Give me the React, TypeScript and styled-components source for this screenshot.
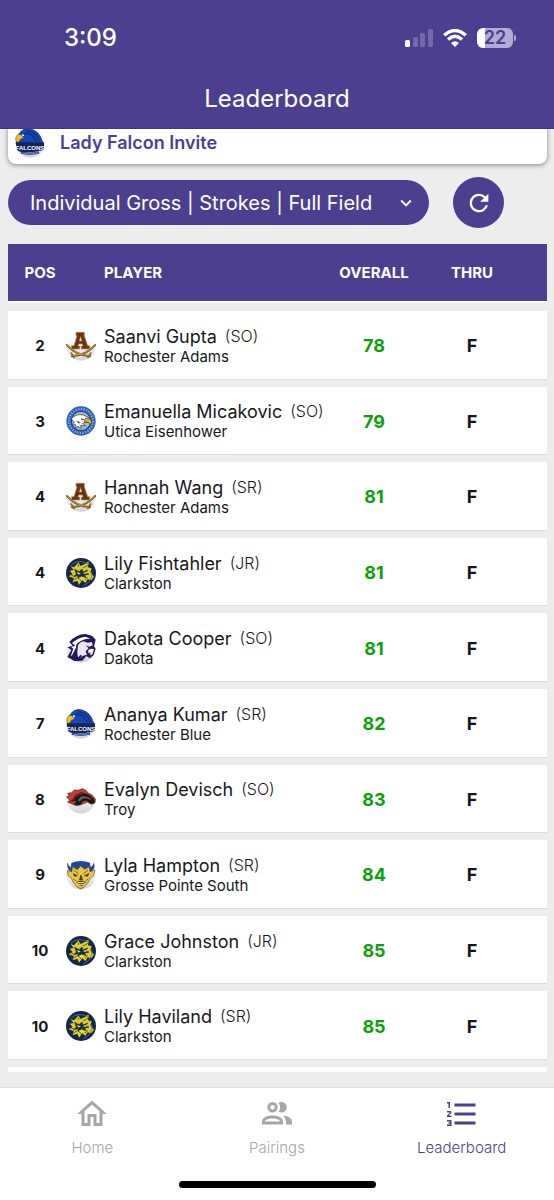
import React from "react";
import styled, { createGlobalStyle } from "styled-components";

const purple = "#4d3f8f";
const ink = "#17171b";

const GlobalStyle = createGlobalStyle`
  * { box-sizing: border-box; }
  body { margin: 0; background: #ededed; font-family: Inter, "Liberation Sans", sans-serif; color: ${ink}; }
`;

const Screen = styled.div`
  display: flex;
  flex-direction: column;
  min-height: 100vh;
`;

const TopBar = styled.header`
  position: relative;
  z-index: 1;
  height: 129px;
  background: ${purple};
  border-bottom: 1px solid #43377f;
  color: #fff;
`;

const StatusBar = styled.div`
  display: flex;
  align-items: center;
  justify-content: space-between;
  padding: 22px 41px 0 64px;
  height: 53px;
`;

const Clock = styled.time`
  font-size: 24px;
  font-weight: 500;
  line-height: 30px;
`;

const StatusIcons = styled.div`
  display: flex;
  align-items: center;
  gap: 10px;
`;

const Battery = styled.span`
  position: relative;
  width: 36px;
  height: 20px;
  border-radius: 6px;
  background: linear-gradient(to right, #fff 8px, #b2abd1 8px);
  color: ${purple};
  font-size: 18px;
  font-weight: 600;
  line-height: 20px;
  text-align: center;
  &::after {
    content: "";
    position: absolute;
    right: -3px;
    top: 7px;
    width: 2px;
    height: 6px;
    border-radius: 0 2px 2px 0;
    background: #b2abd1;
  }
`;

const Title = styled.h1`
  margin: 0;
  padding-top: 30px;
  font-size: 24px;
  font-weight: 400;
  line-height: 32px;
  text-align: center;
`;

const Main = styled.main`
  flex: 1;
  display: flex;
  flex-direction: column;
  padding: 0 7px 15px 8px;
`;

const EventCard = styled.section`
  display: flex;
  align-items: center;
  gap: 15px;
  margin-top: -6px;
  padding: 4px 7px 6px;
  border-radius: 8px;
  background: #fff;
  box-shadow: 0 1px 5px rgba(0, 0, 0, 0.45);
`;

const EventName = styled.h2`
  margin: 0;
  color: ${purple};
  font-size: 18px;
  font-weight: 600;
  line-height: 31px;
`;

const Controls = styled.div`
  display: flex;
  align-items: center;
  gap: 24px;
  padding: 13px 43px 16px 0;
`;

const SelectWrap = styled.label`
  position: relative;
  flex: 1;
  display: flex;
  color: #fff;
  svg {
    position: absolute;
    right: 12px;
    top: 12px;
    pointer-events: none;
  }
`;

const Select = styled.select`
  appearance: none;
  width: 100%;
  height: 45px;
  padding: 0 40px 0 22px;
  border: 0;
  border-radius: 23px;
  background: ${purple};
  color: #fff;
  font-family: inherit;
  font-size: 20px;
`;

const RefreshButton = styled.button`
  display: flex;
  align-items: center;
  justify-content: center;
  width: 51px;
  height: 51px;
  padding: 0;
  border: 0;
  border-radius: 50%;
  background: ${purple};
  color: #fff;
`;

const Table = styled.table`
  flex: 1;
  display: flex;
  flex-direction: column;
`;

const Head = styled.thead`
  display: block;
  border-bottom: 2px solid #fff;
  margin-bottom: 8px;
`;

const Body = styled.tbody`
  flex: 1;
  display: grid;
  grid-template-columns: minmax(0, 1fr);
  grid-template-rows: repeat(10, minmax(68px, 1fr)) 5px;
  gap: 7px;
  &::after {
    content: "";
    background: #fff;
  }
`;

const Row = styled.tr<{ $head?: boolean }>`
  display: grid;
  grid-template-columns: 58px minmax(0, 1fr) 98px 98px;
  align-items: center;
  padding: ${(p) => (p.$head ? "0 26px 0 0" : "1px 26px 0 0")};
  height: ${(p) => (p.$head ? "57px" : "auto")};
  background: ${(p) => (p.$head ? purple : "#fff")};
  box-shadow: ${(p) => (p.$head ? "none" : "inset 0 -1px #dcdce0")};
`;

const HeadCell = styled.th<{ $align?: "left" | "pos" }>`
  padding: 0 0 0 ${(p) => (p.$align === "left" ? "38px" : p.$align === "pos" ? "6px" : "0")};
  color: #fff;
  font-size: 15px;
  font-weight: 700;
  text-align: ${(p) => (p.$align === "left" ? "left" : "center")};
`;

const PosCell = styled.td`
  padding: 0 0 0 6px;
  font-size: 15px;
  font-weight: 700;
  text-align: center;
`;

const PlayerCell = styled.td`
  display: flex;
  align-items: center;
  gap: 8px;
  padding: 0;
`;

const PlayerName = styled.div`
  display: flex;
  gap: 8px;
  font-size: 18px;
  font-weight: 400;
  line-height: 22px;
  white-space: nowrap;
`;

const Grade = styled.span`
  font-size: 16px;
  font-weight: 300;
  line-height: 20px;
`;

const School = styled.div`
  font-size: 15px;
  line-height: 18px;
`;

const ValueCell = styled.td<{ $score?: boolean }>`
  padding: 0;
  color: ${(p) => (p.$score ? "#0ba10b" : ink)};
  font-size: 18px;
  font-weight: 700;
  text-align: center;
`;

const TabBar = styled.nav`
  display: flex;
  flex-wrap: wrap;
  height: 113px;
  border-top: 1px solid #e0e0e0;
  background: #fff;
`;

const Tab = styled.a<{ $active?: boolean }>`
  flex: 1;
  display: flex;
  flex-direction: column;
  align-items: center;
  gap: 6px;
  padding-top: 8px;
  color: ${(p) => (p.$active ? purple : "#a6a6a9")};
  font-size: 15px;
  font-weight: 300;
  line-height: 20px;
  text-decoration: none;
`;

const HomeIndicator = styled.div`
  flex-basis: 100%;
  align-self: flex-end;
  padding-bottom: 12px;
  &::before {
    content: "";
    display: block;
    width: 197px;
    height: 7px;
    margin: 0 auto;
    border-radius: 4px;
    background: #000;
  }
`;

type Team = "adams" | "eisenhower" | "clarkston" | "dakota" | "falcons" | "troy" | "south";

const Ball = () => (
  <>
    <defs>
      <linearGradient id="ball" x1="0" y1="0" x2="0" y2="1">
        <stop offset="0.3" stopColor="#fff" />
        <stop offset="1" stopColor="#d4d4d8" />
      </linearGradient>
    </defs>
    <circle cx="45" cy="45" r="44" fill="url(#ball)" />
  </>
);

const art: Record<Team, React.ReactNode> = {
  adams: (
    <>
      <g fill="none" strokeLinecap="round">
        <path d="M2 42Q34 75 72 76M88 42Q56 75 18 76" stroke="#6f531c" strokeWidth="6" />
        <path d="M2 42Q34 73 66 73M88 42Q56 73 24 73" stroke="#c9a748" strokeWidth="2.5" />
        <path d="M16 66l8 14M74 66l-8 14" stroke="#8a6923" strokeWidth="5" />
      </g>
      <path
        d="M30 4H55V14L65 44H71V54H46V45H51L49 39H38L36 45H41V54H17V44H24L33 14H30ZM44 17L40 30H47Z"
        fill="#6a3515"
        fillRule="evenodd"
        stroke="#b98c48"
        strokeWidth="2"
      />
    </>
  ),
  eisenhower: (
    <>
      <circle cx="45" cy="45" r="44" fill="#2d62b5" />
      <circle cx="45" cy="45" r="36" fill="none" stroke="#7fa6de" strokeWidth="7" strokeDasharray="4 4" />
      <circle cx="45" cy="45" r="29" fill="#aab4be" stroke="#173c7d" strokeWidth="3" />
      <path d="M16 39Q30 22 52 27L70 36Q78 45 74 51L60 48 50 52 58 60 44 58 46 68 36 61 30 66 29 56 19 56 25 49Z" fill="#fff" stroke="#1b2a44" strokeWidth="2" />
      <path d="M58 37Q74 36 77 48L73 56 67 49 55 47Z" fill="#eab92b" stroke="#2a2a20" strokeWidth="2" />
      <path d="M44 37l13 4-9 2zM30 44l14 5-8 3 8 5" fill="#222e3e" />
    </>
  ),
  clarkston: (
    <>
      <circle cx="45" cy="45" r="45" fill="#14264b" />
      <path
        d="M14 25L24 28 38 13 44 24 58 17 68 10 66 28 77 31 73 43 84 56 76 67 65 64 58 75 49 67 39 80 34 68 20 73 23 60 8 55 20 48 11 38 23 36Z"
        fill="#dbcd2f"
      />
      <path
        d="M26 34l13 7 9-8 3 9 14-6-8 10 12 2-13 4 4 7-13-5-10 8-2-9-12 3 8-8zM41 14l-5 13M66 22l-15 8M22 66l12-7M57 66l9-8M46 70l-5-7M14 50l9 4"
        fill="#1c2e42"
        stroke="#1c2e42"
        strokeWidth="2"
      />
      <path d="M32 42l12 4-6 4zM51 45l11-4-4 8zM39 57l15 2-9 6z" fill="#efe24a" />
      <path d="M14 22Q38 0 70 20M77 40Q82 70 52 83" fill="none" stroke="#5f7280" strokeWidth="2.5" />
    </>
  ),
  dakota: (
    <>
      <path d="M10 27Q30 4 58 3L78 8 89 20 84 40 89 47 83 66 72 76 61 69 49 83 25 84 4 72 16 51 4 43 20 38Z" fill="#27175a" />
      <path d="M18 30Q36 14 58 11L74 17Q58 16 44 24Q28 33 30 44L18 67 14 70 22 47 15 42 28 38Z" fill="#fff" />
      <path d="M35 47Q34 29 52 25L65 29 78 27 80 37 70 41 59 37 68 46 59 55 63 65 51 68 40 78Q31 67 35 47Z" fill="#e8e6ef" />
      <path d="M67 51l8-4 9 2-5 15-7 3 2-9-7 3z" fill="#fff" />
      <path d="M32 58l-10 20M46 67l-12 14" stroke="#27175a" strokeWidth="6" />
    </>
  ),
  falcons: (
    <>
      <path d="M7 30Q14 4 38 1Q64 4 76 25L85 47H4Z" fill="#1649b5" stroke="#10255d" strokeWidth="2" />
      <path d="M25 18Q48 8 64 40M36 8Q64 12 73 38" fill="none" stroke="#0e2f83" strokeWidth="4" />
      <path d="M2 32Q5 16 18 20L26 30 16 34 10 44Q1 42 2 32Z" fill="#f2bd26" stroke="#463d25" strokeWidth="1.5" />
      <circle cx="24" cy="22" r="3" fill="#fff" />
      <path d="M2 43H87V66L75 68Q45 76 15 71L5 66Z" fill="#14265b" />
      <text x="45" y="65" textAnchor="middle" fontFamily="Liberation Sans, sans-serif" fontWeight="700" fontSize="18" fill="#fff">
        FALCONS
      </text>
      <path d="M18 74Q45 81 72 73" fill="none" stroke="#1d3e92" strokeWidth="7" />
      <path d="M22 75Q45 80 68 74" fill="none" stroke="#dce6f8" strokeWidth="2" strokeDasharray="4 2" />
    </>
  ),
  troy: (
    <>
      <path d="M2 39L10 34 5 28 17 26 25 18 37 19 49 14 61 20 66 27 77 32 88 45 87 56 78 61 64 54 48 61 31 65 5 54 12 49Z" fill="#d53a2d" stroke="#291a1a" strokeWidth="2" />
      <path d="M13 53L29 32 46 25 66 31 82 43 87 54 76 60 62 50 52 51 41 64 23 61 32 50Z" fill="#161719" />
      <path d="M36 48L44 38 55 36 68 41 75 48 60 43 49 44 40 53Z" fill="#5f6165" />
      <path d="M20 49Q30 30 51 29M12 35l18-8M62 39l14 6" fill="none" stroke="#c72d25" strokeWidth="3" />
    </>
  ),
  south: (
    <>
      <path d="M6 5Q4 15 14 23L16 9Q43-3 72 8L74 22Q85 15 82 5 91 23 78 33L79 43 64 68 54 82 45 87 34 82 24 68 10 43 12 33Q-1 23 6 5Z" fill="#21469a" />
      <path d="M4 31L17 35 20 20 34 29 44 18 56 28 70 20 72 35 87 30 82 48 73 55 65 70 53 82 43 86 32 80 22 67 16 55 6 47Z" fill="#e9c547" stroke="#665020" strokeWidth="2" />
      <path d="M20 39l17 8-12 3zM70 38l-17 9 13 3zM43 46l-4 15h12l-4-15M30 67q15-9 31 0-15 12-31 0" fill="#4b411e" />
      <path d="M23 31l15 10M66 31L52 41M22 57l8 6M67 56l-8 7M40 77h11" fill="none" stroke="#6b5621" strokeWidth="2.5" />
      <path d="M35 68h20" stroke="#fff2a5" strokeWidth="3" />
    </>
  ),
};

const Logo = ({ team }: { team: Team }) => (
  <svg width="30" height="30" viewBox="0 0 90 90" aria-hidden="true">
    <Ball />
    {art[team]}
  </svg>
);

const Icon = ({ d, size }: { d: string; size: number }) => (
  <svg width={size} height={size} viewBox="0 0 24 24" fill="currentColor" aria-hidden="true">
    <path d={d} />
  </svg>
);

const icons = {
  chevron: "M7.41 8.58L12 13.17l4.59-4.59L18 10l-6 6-6-6z",
  refresh: "M17.65 6.35A7.96 7.96 0 0 0 12 4a8 8 0 1 0 7.73 10h-2.08A6 6 0 1 1 12 6c1.66 0 3.14.69 4.22 1.78L13 11h7V4z",
  home: "M12 5.69l5 4.5V18h-2v-6H9v6H7v-7.81l5-4.5M12 3L2 12h3v8h6v-6h2v6h6v-8h3z",
  people:
    "M13.07 10.41a5 5 0 0 0 0-5.82A3.39 3.39 0 0 1 15 4a3.5 3.5 0 0 1 0 7 3.39 3.39 0 0 1-1.93-.59M5.5 7.5A3.5 3.5 0 1 1 9 11a3.5 3.5 0 0 1-3.5-3.5m2 0A1.5 1.5 0 1 0 9 6a1.5 1.5 0 0 0-1.5 1.5M16 17v2H2v-2s0-4 7-4 7 4 7 4m-2 0c-.14-.78-1.33-2-5-2s-4.93 1.31-5 2m11.95-4A5.32 5.32 0 0 1 18 17v2h4v-2s0-3.63-6.06-4z",
  list: "M7 13v-2h14v2H7m0 6v-2h14v2H7M7 7V5h14v2H7M3 8V5H2V4h2v4H3m-1 9v-1h3v4H2v-1h2v-.5H3v-1h1V17H2m2.25-7a.75.75 0 0 1 .75.75c0 .2-.08.39-.21.52L3.12 13H5v1H2v-.92L4 11H2v-1h2.25z",
};

const players: { pos: number; name: string; grade: string; school: string; score: number; team: Team }[] = [
  { pos: 2, name: "Saanvi Gupta", grade: "SO", school: "Rochester Adams", score: 78, team: "adams" },
  { pos: 3, name: "Emanuella Micakovic", grade: "SO", school: "Utica Eisenhower", score: 79, team: "eisenhower" },
  { pos: 4, name: "Hannah Wang", grade: "SR", school: "Rochester Adams", score: 81, team: "adams" },
  { pos: 4, name: "Lily Fishtahler", grade: "JR", school: "Clarkston", score: 81, team: "clarkston" },
  { pos: 4, name: "Dakota Cooper", grade: "SO", school: "Dakota", score: 81, team: "dakota" },
  { pos: 7, name: "Ananya Kumar", grade: "SR", school: "Rochester Blue", score: 82, team: "falcons" },
  { pos: 8, name: "Evalyn Devisch", grade: "SO", school: "Troy", score: 83, team: "troy" },
  { pos: 9, name: "Lyla Hampton", grade: "SR", school: "Grosse Pointe South", score: 84, team: "south" },
  { pos: 10, name: "Grace Johnston", grade: "JR", school: "Clarkston", score: 85, team: "clarkston" },
  { pos: 10, name: "Lily Haviland", grade: "SR", school: "Clarkston", score: 85, team: "clarkston" },
];

export default function App() {
  return (
    <Screen>
      <GlobalStyle />
      <TopBar>
        <StatusBar>
          <Clock>3:09</Clock>
          <StatusIcons>
            <svg width="28" height="18" viewBox="0 0 28 18" fill="#fff" aria-hidden="true">
              <rect y="11" width="5" height="7" rx="1.5" />
              <g opacity="0.22">
                <rect x="8" y="8" width="5" height="10" rx="1.5" />
                <rect x="15" y="4" width="5" height="14" rx="1.5" />
                <rect x="23" width="5" height="18" rx="1.5" />
              </g>
            </svg>
            <svg width="24" height="18" viewBox="0 0 24 18" fill="none" stroke="#fff" strokeWidth="3.4" aria-hidden="true">
              <path d="M1.2 6.3Q12-3.300 22.8 6.3" />
              <path d="M5 10.4Q12 4.200 19 10.4" />
              <path d="M12 18L8 14Q12 10.600 16 14Z" fill="#fff" stroke="none" />
            </svg>
            <Battery>22</Battery>
          </StatusIcons>
        </StatusBar>
        <Title>Leaderboard</Title>
      </TopBar>
      <Main>
        <EventCard>
          <Logo team="falcons" />
          <EventName>Lady Falcon Invite</EventName>
        </EventCard>
        <Controls>
          <SelectWrap>
            <Select aria-label="Leaderboard view">
              <option>Individual Gross | Strokes | Full Field</option>
            </Select>
            <Icon d={icons.chevron} size={22} />
          </SelectWrap>
          <RefreshButton type="button" aria-label="Refresh">
            <Icon d={icons.refresh} size={28} />
          </RefreshButton>
        </Controls>
        <Table>
          <Head>
            <Row $head>
              <HeadCell $align="pos">POS</HeadCell>
              <HeadCell $align="left">PLAYER</HeadCell>
              <HeadCell>OVERALL</HeadCell>
              <HeadCell>THRU</HeadCell>
            </Row>
          </Head>
          <Body>
            {players.map((p) => (
              <Row key={p.name}>
                <PosCell>{p.pos}</PosCell>
                <PlayerCell>
                  <Logo team={p.team} />
                  <div>
                    <PlayerName>
                      {p.name}
                      <Grade>({p.grade})</Grade>
                    </PlayerName>
                    <School>{p.school}</School>
                  </div>
                </PlayerCell>
                <ValueCell $score>{p.score}</ValueCell>
                <ValueCell>F</ValueCell>
              </Row>
            ))}
          </Body>
        </Table>
      </Main>
      <TabBar>
        <Tab href="#home">
          <Icon d={icons.home} size={36} />
          Home
        </Tab>
        <Tab href="#pairings">
          <Icon d={icons.people} size={36} />
          Pairings
        </Tab>
        <Tab href="#leaderboard" $active aria-current="page">
          <Icon d={icons.list} size={36} />
          Leaderboard
        </Tab>
        <HomeIndicator />
      </TabBar>
    </Screen>
  );
}
